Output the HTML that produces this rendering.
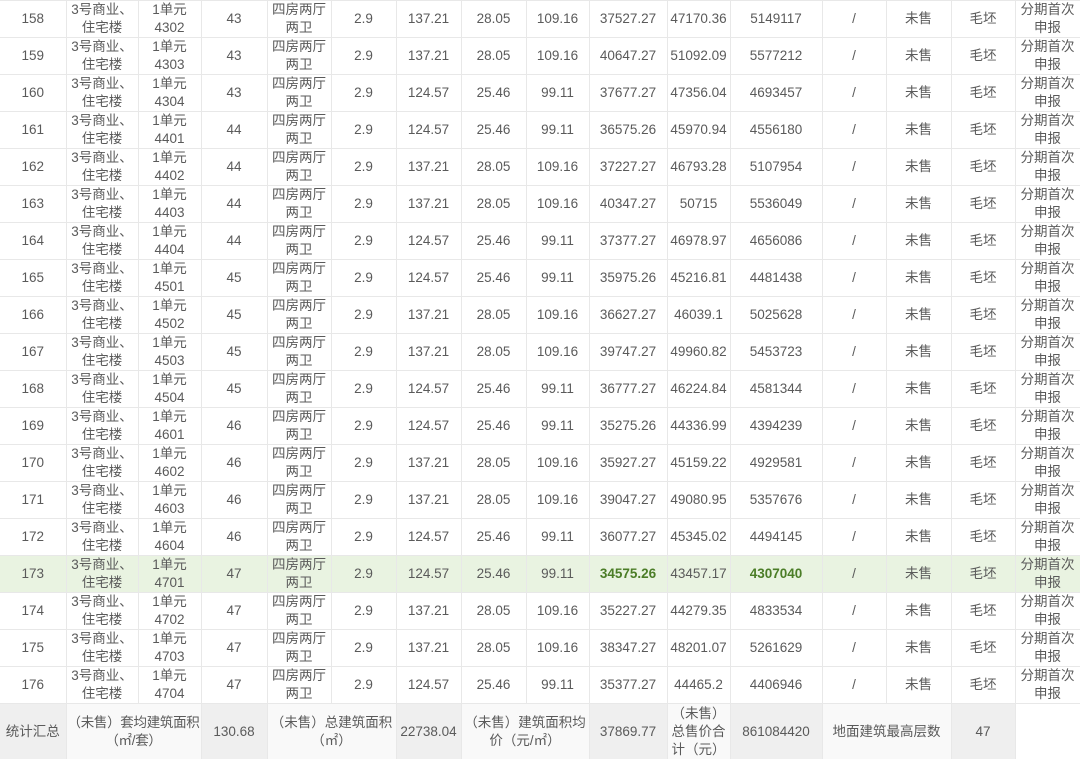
<!DOCTYPE html>
<html><head><meta charset="utf-8">
<style>
html,body{margin:0;padding:0;background:#fff;width:1080px;height:759px;overflow:hidden}
table{border-collapse:collapse;table-layout:fixed;width:1080px;font-family:"Liberation Sans","Noto Sans CJK SC",sans-serif;font-size:13.5px;color:#5a5a5a}
td{border:1px solid #e8e8e8;height:36px;padding:0 1px;text-align:center;line-height:18px;overflow:hidden;white-space:normal}
tr.h td{background:#e9f3e1}
tr.h td.b{font-weight:bold;color:#4b7d27}
tr.s td{height:55px;background:#f9f9f9}
tr.s td.g{background:#efefef}
tr.s td.w{background:#fff;border-color:#fff}
td.nw{white-space:nowrap;padding:0;letter-spacing:-0.3px}
td:first-child{border-left:none}
</style></head><body>
<table>
<colgroup><col style="width:66px"><col style="width:72px"><col style="width:63px"><col style="width:66px"><col style="width:64px"><col style="width:65px"><col style="width:65px"><col style="width:65px"><col style="width:63px"><col style="width:78px"><col style="width:63px"><col style="width:92px"><col style="width:64px"><col style="width:65px"><col style="width:64px"><col style="width:65px"></colgroup>
<tr><td>158</td><td>3号商业、<br>住宅楼</td><td>1单元<br>4302</td><td>43</td><td>四房两厅<br>两卫</td><td>2.9</td><td>137.21</td><td>28.05</td><td>109.16</td><td>37527.27</td><td>47170.36</td><td>5149117</td><td>/</td><td>未售</td><td>毛坯</td><td>分期首次<br>申报</td></tr>
<tr><td>159</td><td>3号商业、<br>住宅楼</td><td>1单元<br>4303</td><td>43</td><td>四房两厅<br>两卫</td><td>2.9</td><td>137.21</td><td>28.05</td><td>109.16</td><td>40647.27</td><td>51092.09</td><td>5577212</td><td>/</td><td>未售</td><td>毛坯</td><td>分期首次<br>申报</td></tr>
<tr><td>160</td><td>3号商业、<br>住宅楼</td><td>1单元<br>4304</td><td>43</td><td>四房两厅<br>两卫</td><td>2.9</td><td>124.57</td><td>25.46</td><td>99.11</td><td>37677.27</td><td>47356.04</td><td>4693457</td><td>/</td><td>未售</td><td>毛坯</td><td>分期首次<br>申报</td></tr>
<tr><td>161</td><td>3号商业、<br>住宅楼</td><td>1单元<br>4401</td><td>44</td><td>四房两厅<br>两卫</td><td>2.9</td><td>124.57</td><td>25.46</td><td>99.11</td><td>36575.26</td><td>45970.94</td><td>4556180</td><td>/</td><td>未售</td><td>毛坯</td><td>分期首次<br>申报</td></tr>
<tr><td>162</td><td>3号商业、<br>住宅楼</td><td>1单元<br>4402</td><td>44</td><td>四房两厅<br>两卫</td><td>2.9</td><td>137.21</td><td>28.05</td><td>109.16</td><td>37227.27</td><td>46793.28</td><td>5107954</td><td>/</td><td>未售</td><td>毛坯</td><td>分期首次<br>申报</td></tr>
<tr><td>163</td><td>3号商业、<br>住宅楼</td><td>1单元<br>4403</td><td>44</td><td>四房两厅<br>两卫</td><td>2.9</td><td>137.21</td><td>28.05</td><td>109.16</td><td>40347.27</td><td>50715</td><td>5536049</td><td>/</td><td>未售</td><td>毛坯</td><td>分期首次<br>申报</td></tr>
<tr><td>164</td><td>3号商业、<br>住宅楼</td><td>1单元<br>4404</td><td>44</td><td>四房两厅<br>两卫</td><td>2.9</td><td>124.57</td><td>25.46</td><td>99.11</td><td>37377.27</td><td>46978.97</td><td>4656086</td><td>/</td><td>未售</td><td>毛坯</td><td>分期首次<br>申报</td></tr>
<tr><td>165</td><td>3号商业、<br>住宅楼</td><td>1单元<br>4501</td><td>45</td><td>四房两厅<br>两卫</td><td>2.9</td><td>124.57</td><td>25.46</td><td>99.11</td><td>35975.26</td><td>45216.81</td><td>4481438</td><td>/</td><td>未售</td><td>毛坯</td><td>分期首次<br>申报</td></tr>
<tr><td>166</td><td>3号商业、<br>住宅楼</td><td>1单元<br>4502</td><td>45</td><td>四房两厅<br>两卫</td><td>2.9</td><td>137.21</td><td>28.05</td><td>109.16</td><td>36627.27</td><td>46039.1</td><td>5025628</td><td>/</td><td>未售</td><td>毛坯</td><td>分期首次<br>申报</td></tr>
<tr><td>167</td><td>3号商业、<br>住宅楼</td><td>1单元<br>4503</td><td>45</td><td>四房两厅<br>两卫</td><td>2.9</td><td>137.21</td><td>28.05</td><td>109.16</td><td>39747.27</td><td>49960.82</td><td>5453723</td><td>/</td><td>未售</td><td>毛坯</td><td>分期首次<br>申报</td></tr>
<tr><td>168</td><td>3号商业、<br>住宅楼</td><td>1单元<br>4504</td><td>45</td><td>四房两厅<br>两卫</td><td>2.9</td><td>124.57</td><td>25.46</td><td>99.11</td><td>36777.27</td><td>46224.84</td><td>4581344</td><td>/</td><td>未售</td><td>毛坯</td><td>分期首次<br>申报</td></tr>
<tr><td>169</td><td>3号商业、<br>住宅楼</td><td>1单元<br>4601</td><td>46</td><td>四房两厅<br>两卫</td><td>2.9</td><td>124.57</td><td>25.46</td><td>99.11</td><td>35275.26</td><td>44336.99</td><td>4394239</td><td>/</td><td>未售</td><td>毛坯</td><td>分期首次<br>申报</td></tr>
<tr><td>170</td><td>3号商业、<br>住宅楼</td><td>1单元<br>4602</td><td>46</td><td>四房两厅<br>两卫</td><td>2.9</td><td>137.21</td><td>28.05</td><td>109.16</td><td>35927.27</td><td>45159.22</td><td>4929581</td><td>/</td><td>未售</td><td>毛坯</td><td>分期首次<br>申报</td></tr>
<tr><td>171</td><td>3号商业、<br>住宅楼</td><td>1单元<br>4603</td><td>46</td><td>四房两厅<br>两卫</td><td>2.9</td><td>137.21</td><td>28.05</td><td>109.16</td><td>39047.27</td><td>49080.95</td><td>5357676</td><td>/</td><td>未售</td><td>毛坯</td><td>分期首次<br>申报</td></tr>
<tr><td>172</td><td>3号商业、<br>住宅楼</td><td>1单元<br>4604</td><td>46</td><td>四房两厅<br>两卫</td><td>2.9</td><td>124.57</td><td>25.46</td><td>99.11</td><td>36077.27</td><td>45345.02</td><td>4494145</td><td>/</td><td>未售</td><td>毛坯</td><td>分期首次<br>申报</td></tr>
<tr class="h"><td>173</td><td>3号商业、<br>住宅楼</td><td>1单元<br>4701</td><td>47</td><td>四房两厅<br>两卫</td><td>2.9</td><td>124.57</td><td>25.46</td><td>99.11</td><td class="b">34575.26</td><td>43457.17</td><td class="b">4307040</td><td>/</td><td>未售</td><td>毛坯</td><td>分期首次<br>申报</td></tr>
<tr><td>174</td><td>3号商业、<br>住宅楼</td><td>1单元<br>4702</td><td>47</td><td>四房两厅<br>两卫</td><td>2.9</td><td>137.21</td><td>28.05</td><td>109.16</td><td>35227.27</td><td>44279.35</td><td>4833534</td><td>/</td><td>未售</td><td>毛坯</td><td>分期首次<br>申报</td></tr>
<tr><td>175</td><td>3号商业、<br>住宅楼</td><td>1单元<br>4703</td><td>47</td><td>四房两厅<br>两卫</td><td>2.9</td><td>137.21</td><td>28.05</td><td>109.16</td><td>38347.27</td><td>48201.07</td><td>5261629</td><td>/</td><td>未售</td><td>毛坯</td><td>分期首次<br>申报</td></tr>
<tr><td>176</td><td>3号商业、<br>住宅楼</td><td>1单元<br>4704</td><td>47</td><td>四房两厅<br>两卫</td><td>2.9</td><td>124.57</td><td>25.46</td><td>99.11</td><td>35377.27</td><td>44465.2</td><td>4406946</td><td>/</td><td>未售</td><td>毛坯</td><td>分期首次<br>申报</td></tr>
<tr class="s"><td class="g">统计汇总</td><td colspan="2" class="nw">（未售）套均建筑面积<br>（㎡/套）</td><td class="g">130.68</td><td colspan="2">（未售）总建筑面积<br>（㎡）</td><td class="g">22738.04</td><td colspan="2">（未售）建筑面积均<br>价（元/㎡）</td><td class="g">37869.77</td><td>（未售）<br>总售价合<br>计（元）</td><td class="g">861084420</td><td colspan="2">地面建筑最高层数</td><td class="g">47</td><td class="w"></td></tr>
</table>
</body></html>
